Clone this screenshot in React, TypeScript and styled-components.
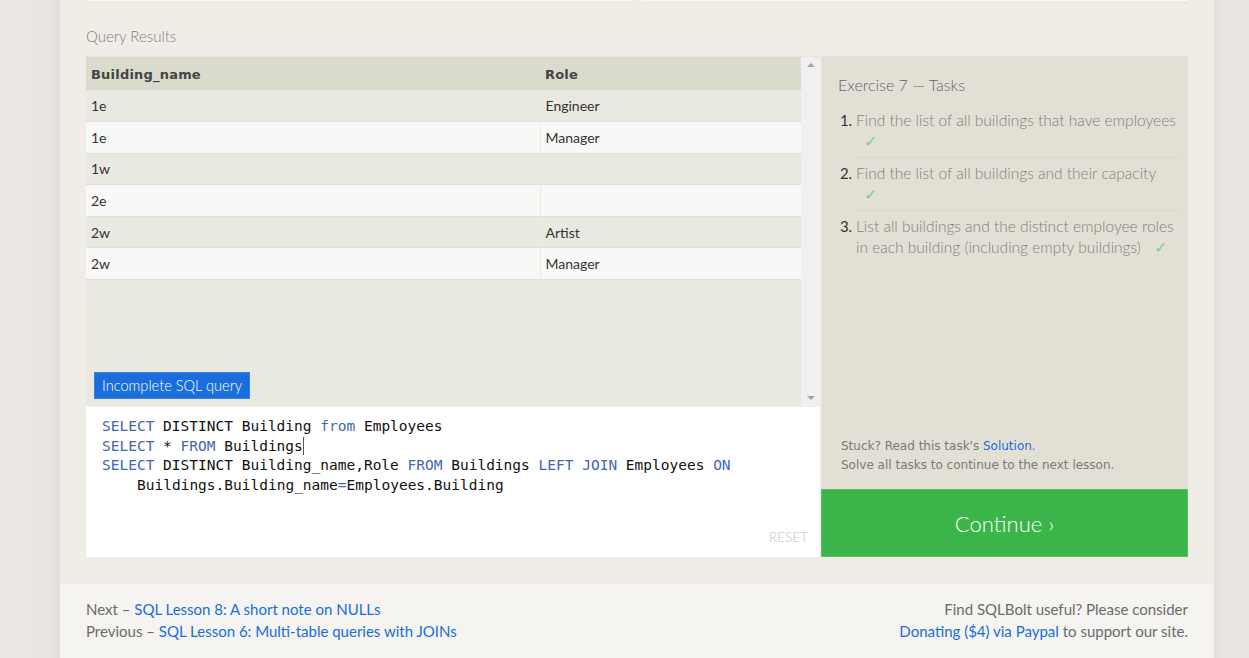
import React from "react";
import styled, { createGlobalStyle } from "styled-components";

const GlobalStyle = createGlobalStyle`
  html, body {
    margin: 0;
    padding: 0;
    height: 658px;
    overflow: hidden;
    background: #e8e5e1;
  }
  body {
    font-family: Lato, "Open Sans", Arial, sans-serif;
  }
  * {
    box-sizing: border-box;
  }
`;

const Page = styled.div`
  display: flex;
  height: 658px;
`;

const Gutter = styled.div<{ side: "left" | "right" }>`
  width: ${({ side }) => (side === "left" ? "60px" : "35px")};
  flex-shrink: 0;
  background: ${({ side }) =>
    side === "left"
      ? "linear-gradient(to right, #ebe8e5 0%, #e9e6e2 80%, #e0dcd8 100%)"
      : "linear-gradient(to right, #e2dedb 0%, #e8e5e1 20%, #e9e6e3 100%)"};
`;

const Main = styled.div`
  width: 1154px;
  flex-shrink: 0;
  background: #f0ede6;
  display: flex;
  flex-direction: column;
`;

const Content = styled.div`
  padding: 0 26px;
`;

const TopStrip = styled.div`
  display: grid;
  grid-template-columns: 546px 547px;
  gap: 9px;
  height: 3px;
`;

const StripPanel = styled.div`
  background: #f6f5f0;
  border-bottom: 1px solid #e6e3dc;
`;

const SectionLabel = styled.div`
  margin-top: 24px;
  height: 29px;
  font-size: 15px;
  font-weight: 300;
  color: #808080;
`;

const Workspace = styled.div`
  display: grid;
  grid-template-columns: 734px 367px;
  gap: 1px;
  height: 501px;
`;

const LeftColumn = styled.div`
  display: flex;
  flex-direction: column;
  gap: 1px;
`;

const ResultsPanel = styled.div`
  position: relative;
  height: 350px;
  display: flex;
  background: #eae9e1;
  border-top: 1px solid #e6e4dc;
`;

const TableArea = styled.div`
  flex: 1;
`;

const Table = styled.table`
  width: 100%;
  border-collapse: collapse;
  font-size: 14px;
`;

const HeadCell = styled.th<{ width?: string }>`
  background: #dadacd;
  height: 33px;
  padding: 2px 5px 0;
  text-align: left;
  font-family: "DejaVu Sans", Verdana, sans-serif;
  font-size: 13px;
  font-weight: bold;
  letter-spacing: 0.2px;
  color: #444;
  width: ${({ width }) => width || "auto"};
`;

const Row = styled.tr<{ light: boolean }>`
  height: 31.6px;
  background: ${({ light }) => (light ? "#f8f8f7" : "#eae9e1")};
`;

const Cell = styled.td<{ divider?: boolean }>`
  padding: 0 4px 0 5px;
  color: #333;
  font-weight: 400;
  border-bottom: 1px solid #e2e0d8;
  border-left: ${({ divider }) => (divider ? "1px solid #ecebe5" : "none")};
`;

const Scrollbar = styled.div`
  width: 19px;
  background: #f0f0f0;
  display: flex;
  flex-direction: column;
  justify-content: space-between;
  align-items: center;
  padding: 6px 0 6px;
`;

const Arrow = styled.div<{ dir: "up" | "down" }>`
  width: 0;
  height: 0;
  border-left: 4px solid transparent;
  border-right: 4px solid transparent;
  ${({ dir }) =>
    dir === "up" ? "border-bottom: 4px solid #a3a3a3;" : "border-top: 4px solid #a3a3a3;"}
`;

const Badge = styled.div`
  position: absolute;
  left: 8px;
  bottom: 7px;
  background: #1a6ddc;
  border: 1px solid #3a83e0;
  color: #fff;
  font-size: 14.6px;
  font-weight: 300;
  height: 27px;
  padding: 0 7px;
  display: flex;
  align-items: center;
`;

const Editor = styled.div`
  position: relative;
  flex: 1;
  background: #fff;
  padding: 10px 16px;
  font-family: "DejaVu Sans Mono", "Liberation Mono", monospace;
  font-size: 14.5px;
  line-height: 19.7px;
  color: #111;
  white-space: pre;
`;

const CodeLine = styled.div<{ wrapped?: boolean }>`
  padding-left: ${({ wrapped }) => (wrapped ? "35px" : "0")};
`;

const Kw = styled.span`
  color: #4266b2;
`;

const Caret = styled.span`
  display: inline-block;
  width: 1px;
  height: 18px;
  background: #555;
  vertical-align: -4px;
`;

const ResetLink = styled.div`
  position: absolute;
  right: 12px;
  bottom: 9px;
  font-family: Lato, "Open Sans", sans-serif;
  font-size: 13.5px;
  font-weight: 300;
  color: #c4c4c4;
`;

const RightColumn = styled.div`
  display: flex;
  flex-direction: column;
`;

const TasksPanel = styled.div`
  flex: 1;
  background: #e2e0d4;
  border: 1px solid #e6e4da;
  border-bottom: none;
  padding: 18px 7px 14px 16px;
  display: flex;
  flex-direction: column;
`;

const TasksTitle = styled.div`
  font-size: 16px;
  font-weight: 300;
  color: #5e6577;
  margin-bottom: 11px;
`;

const TaskList = styled.ol`
  margin: 0;
  padding: 0 0 0 18px;
  font-size: 15.5px;
  font-weight: 300;
  line-height: 21px;
  color: #7f7f7f;

  li::marker {
    color: #333;
    font-weight: 400;
    font-size: 15px;
  }
`;

const TaskItem = styled.li<{ last?: boolean }>`
  padding: 5px 0;
  border-bottom: ${({ last }) => (last ? "none" : "1px solid #d9d7cb")};
`;

const Check = styled.span<{ block?: boolean }>`
  display: ${({ block }) => (block ? "block" : "inline-block")};
  margin-left: ${({ block }) => (block ? "8px" : "13px")};
  color: #7fce85;
`;

const StuckNote = styled.div`
  margin-top: auto;
  font-family: "DejaVu Sans", Verdana, sans-serif;
  font-size: 12px;
  line-height: 19px;
  color: #7a7a7a;
  padding-left: 3px;
`;

const Link = styled.a`
  color: #1a6ddc;
  text-decoration: none;
`;

const ContinueButton = styled.div`
  height: 68px;
  background: #3bb54a;
  border: 1px solid #5fbd68;
  display: flex;
  align-items: center;
  justify-content: center;
  color: #fff;
  font-size: 22px;
  font-weight: 300;
`;

const Footer = styled.div`
  margin-top: 27px;
  flex: 1;
  background: #f5f4f0;
  padding: 14px 26px 0;
  display: flex;
  justify-content: space-between;
  font-size: 15px;
  font-weight: 400;
  line-height: 22px;
  color: #6b6b6b;
`;

const FooterCol = styled.div<{ right?: boolean }>`
  text-align: ${({ right }) => (right ? "right" : "left")};
`;

const rows: [string, string][] = [
  ["1e", "Engineer"],
  ["1e", "Manager"],
  ["1w", ""],
  ["2e", ""],
  ["2w", "Artist"],
  ["2w", "Manager"],
];

const tasks = [
  { text: "Find the list of all buildings that have employees", block: true },
  { text: "Find the list of all buildings and their capacity", block: true },
  {
    text: "List all buildings and the distinct employee roles in each building (including empty buildings)",
    block: false,
  },
];

const App = () => {
  return (
    <>
      <GlobalStyle />
      <Page>
        <Gutter side="left" />
        <Main>
          <Content>
            <TopStrip>
              <StripPanel />
              <StripPanel />
            </TopStrip>
            <SectionLabel>Query Results</SectionLabel>
            <Workspace>
              <LeftColumn>
                <ResultsPanel>
                  <TableArea>
                    <Table>
                      <thead>
                        <tr>
                          <HeadCell width="454px">Building_name</HeadCell>
                          <HeadCell>Role</HeadCell>
                        </tr>
                      </thead>
                      <tbody>
                        {rows.map(([b, r], i) => (
                          <Row key={i} light={i % 2 === 1}>
                            <Cell>{b}</Cell>
                            <Cell divider>{r}</Cell>
                          </Row>
                        ))}
                      </tbody>
                    </Table>
                  </TableArea>
                  <Scrollbar>
                    <Arrow dir="up" />
                    <Arrow dir="down" />
                  </Scrollbar>
                  <Badge>Incomplete SQL query</Badge>
                </ResultsPanel>
                <Editor>
                  <CodeLine>
                    <Kw>SELECT</Kw> DISTINCT Building <Kw>from</Kw> Employees
                  </CodeLine>
                  <CodeLine>
                    <Kw>SELECT</Kw> * <Kw>FROM</Kw> Buildings
                    <Caret />
                  </CodeLine>
                  <CodeLine>
                    <Kw>SELECT</Kw> DISTINCT Building_name,Role <Kw>FROM</Kw> Buildings{" "}
                    <Kw>LEFT</Kw> <Kw>JOIN</Kw> Employees <Kw>ON</Kw>
                  </CodeLine>
                  <CodeLine wrapped>
                    Buildings.Building_name<Kw>=</Kw>Employees.Building
                  </CodeLine>
                  <ResetLink>RESET</ResetLink>
                </Editor>
              </LeftColumn>
              <RightColumn>
                <TasksPanel>
                  <TasksTitle>Exercise 7 — Tasks</TasksTitle>
                  <TaskList>
                    {tasks.map((t, i) => (
                      <TaskItem key={i} last={i === tasks.length - 1}>
                        {t.text}
                        <Check block={t.block}>✓</Check>
                      </TaskItem>
                    ))}
                  </TaskList>
                  <StuckNote>
                    Stuck? Read this task's <Link href="#">Solution</Link>.
                    <br />
                    Solve all tasks to continue to the next lesson.
                  </StuckNote>
                </TasksPanel>
                <ContinueButton>Continue ›</ContinueButton>
              </RightColumn>
            </Workspace>
          </Content>
          <Footer>
            <FooterCol>
              Next – <Link href="#">SQL Lesson 8: A short note on NULLs</Link>
              <br />
              Previous – <Link href="#">SQL Lesson 6: Multi-table queries with JOINs</Link>
            </FooterCol>
            <FooterCol right>
              Find SQLBolt useful? Please consider
              <br />
              <Link href="#">Donating ($4) via Paypal</Link> to support our site.
            </FooterCol>
          </Footer>
        </Main>
        <Gutter side="right" />
      </Page>
    </>
  );
};

export default App;
